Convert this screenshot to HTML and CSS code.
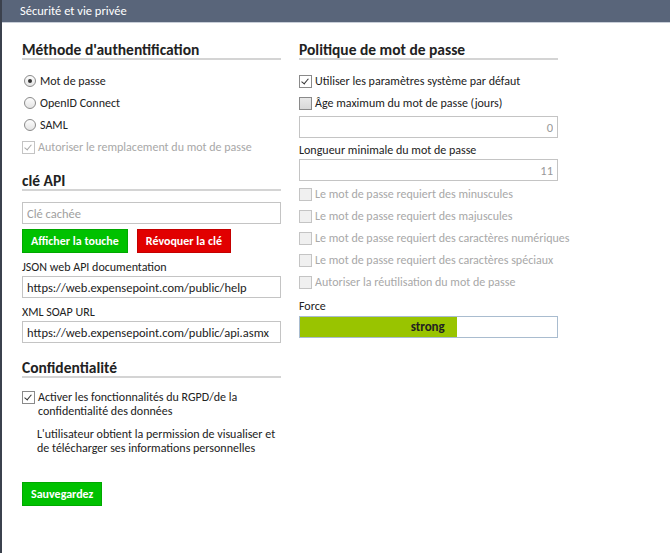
FILE: index.html
```html
<!DOCTYPE html>
<html lang="fr">
<head>
    <meta charset="UTF-8">
    <title>Sécurité et vie privée</title>
    <link rel="stylesheet" href="styles.css">
</head>

<body>
    <div class="window">
        <div class="titlebar">Sécurité et vie privée</div>

        <div class="content">
            <div class="column">
                <h2 class="section-title">Méthode d'authentification</h2>
                <div class="options">
                    <label class="option"><span class="radio checked"></span>Mot de passe</label>
                    <label class="option"><span class="radio"></span>OpenID Connect</label>
                    <label class="option"><span class="radio"></span>SAML</label>
                    <label class="option disabled"><span class="check checked"></span>Autoriser le remplacement du mot de passe</label>
                </div>

                <h2 class="section-title">clé API</h2>
                <input class="field" type="text" placeholder="Clé cachée">
                <div class="button-row">
                    <button class="btn btn-green">Afficher la touche</button>
                    <button class="btn btn-red">Révoquer la clé</button>
                </div>
                <div class="field-label">JSON web API documentation</div>
                <input class="field" type="text" value="https://web.expensepoint.com/public/help">
                <div class="field-label">XML SOAP URL</div>
                <input class="field" type="text" value="https://web.expensepoint.com/public/api.asmx">

                <h2 class="section-title privacy">Confidentialité</h2>
                <label class="option multiline"><span class="check checked"></span><span>Activer les fonctionnalités du RGPD/de la confidentialité des données</span></label>
                <p class="note">L'utilisateur obtient la permission de visualiser et de télécharger ses informations personnelles</p>

                <button class="btn btn-green btn-save">Sauvegardez</button>
            </div>

            <div class="column">
                <h2 class="section-title">Politique de mot de passe</h2>
                <div class="options">
                    <label class="option"><span class="check checked"></span>Utiliser les paramètres système par défaut</label>
                    <label class="option"><span class="check"></span>Âge maximum du mot de passe (jours)</label>
                </div>
                <input class="field number max-age" type="text" value="0">
                <div class="field-label min-length">Longueur minimale du mot de passe</div>
                <input class="field number" type="text" value="11">
                <div class="options rules">
                    <label class="option disabled"><span class="check"></span>Le mot de passe requiert des minuscules</label>
                    <label class="option disabled"><span class="check"></span>Le mot de passe requiert des majuscules</label>
                    <label class="option disabled"><span class="check"></span>Le mot de passe requiert des caractères numériques</label>
                    <label class="option disabled"><span class="check"></span>Le mot de passe requiert des caractères spéciaux</label>
                    <label class="option disabled"><span class="check"></span>Autoriser la réutilisation du mot de passe</label>
                </div>
                <div class="field-label force-label">Force</div>
                <div class="strength">
                    <div class="strength-fill" style="width: 61%;">strong</div>
                </div>
            </div>
        </div>
    </div>
</body>
</html>
```

FILE: styles.css
```css
body {
    margin: 0;
    font-family: "Carlito", "Calibri", "Lato", sans-serif;
    font-size: 12px;
    color: #222;
    background-color: #fff;
}

.window {
    min-height: 553px;
    border-left: 2px solid #3b414d;
    box-sizing: border-box;
}

.titlebar {
    height: 22px;
    line-height: 22px;
    padding-left: 18px;
    background-color: #59657a;
    color: #fff;
    font-size: 12.5px;
    border-bottom: 1px solid #c8ced8;
}

.content {
    display: grid;
    grid-template-columns: 259px 259px;
    column-gap: 18px;
    padding-left: 20px;
}

.section-title {
    margin: 18px 0 0;
    font-size: 15.5px;
    line-height: 17px;
    font-weight: bold;
    color: #222;
    border-bottom: 2px solid #d4d4d4;
}

.options {
    margin-top: 10px;
}

.option {
    display: flex;
    align-items: center;
    height: 22px;
    white-space: nowrap;
}

.option.disabled {
    color: #a8a8a8;
}

.option.multiline {
    align-items: flex-start;
    height: auto;
    line-height: 14px;
    white-space: normal;
    margin-top: 12px;
}

.option.multiline .check {
    margin-top: 1px;
}

.radio {
    width: 10px;
    height: 10px;
    margin: 0 4px 0 2px;
    border: 1px solid #8a8a8a;
    border-radius: 50%;
    background: linear-gradient(#fdfdfd, #e4e4e4);
    position: relative;
    flex-shrink: 0;
}

.radio.checked::after {
    content: "";
    position: absolute;
    left: 3px;
    top: 3px;
    width: 4px;
    height: 4px;
    border-radius: 50%;
    background-color: #333;
}

.check {
    width: 11px;
    height: 11px;
    margin: 0 3px 0 0;
    border: 1px solid #8a8a8a;
    background: linear-gradient(#e8e8e8, #d8d8d8);
    position: relative;
    flex-shrink: 0;
}

.check.checked {
    background: #fff;
}

.check.checked::after {
    content: "";
    position: absolute;
    left: 3px;
    top: 1px;
    width: 3px;
    height: 6px;
    border: solid #333;
    border-width: 0 1.5px 1.5px 0;
    transform: rotate(40deg);
}

.option.disabled .check {
    border-color: #c4c4c4;
    background: #f0f0f0;
}

.option.disabled .check.checked {
    background: #fff;
}

.option.disabled .check.checked::after {
    border-color: #a8a8a8;
}

.field {
    display: block;
    width: 100%;
    height: 22px;
    box-sizing: border-box;
    margin: 0;
    padding: 0 4px;
    border: 1px solid #c4c4c4;
    font-family: inherit;
    font-size: 12.5px;
    color: #222;
    background-color: #fff;
}

.field::placeholder {
    color: #a0a0a0;
}

.field.number {
    text-align: right;
    color: #999;
}

.column > .section-title + .field {
    margin-top: 11px;
}

.button-row {
    display: flex;
    gap: 9px;
    margin-top: 5px;
}

.btn {
    height: 24px;
    padding: 0 8px;
    border: 1px solid;
    font-family: inherit;
    font-size: 12px;
    font-weight: bold;
    color: #fff;
    cursor: pointer;
}

.btn-green {
    background-color: #00c100;
    border-color: #00a800;
}

.btn-red {
    background-color: #e10000;
    border-color: #c40000;
}

.field-label {
    height: 18px;
    line-height: 18px;
    margin-top: 5px;
}

.options + .section-title {
    margin-top: 14px;
}

.section-title.privacy {
    margin-top: 16px;
}

.note {
    margin: 9px 0 0;
    padding-left: 15px;
    line-height: 14px;
}

.btn-save {
    margin-top: 27px;
}

.field.max-age {
    margin-top: 2px;
}

.field-label.min-length {
    margin-top: 3px;
}

.options.rules {
    margin-top: 2px;
}

.force-label {
    margin-top: 4px;
}

.strength {
    height: 20px;
    border: 1px solid #a9bccf;
    background-color: #fff;
    margin-top: 1px;
}

.strength-fill {
    height: 100%;
    background-color: #99c400;
    text-align: right;
    box-sizing: border-box;
    padding-right: 12px;
    line-height: 20px;
    font-size: 13px;
    font-weight: bold;
    color: #222;
}
```
